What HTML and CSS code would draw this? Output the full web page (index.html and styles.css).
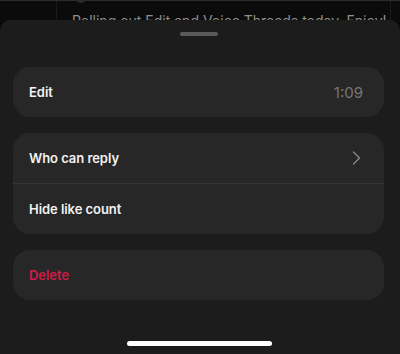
FILE: index.html
```html
<!DOCTYPE html>
<html>
<head>
<meta charset="utf-8">
<link rel="stylesheet" href="styles.css">
</head>
<body>
<div class="behind">
  <div class="rail"></div>
  <div class="post">
    <span class="avatar-edge"></span>
    <p class="post-text">Rolling out Edit and Voice Threads today. Enjoy!</p>
  </div>
  <div class="rail-right"></div>
</div>
<div class="sheet">
  <div class="handle"></div>
  <div class="groups">
    <div class="card">
      <div class="row"><span class="label">Edit</span><span class="timer">1:09</span></div>
    </div>
    <div class="card">
      <div class="row"><span class="label">Who can reply</span>
        <svg class="chev" width="9" height="14" viewBox="0 0 9 14"><path d="M1.5 1 L7.5 7 L1.5 13" fill="none" stroke="#8a8a8a" stroke-width="1.3" stroke-linecap="round" stroke-linejoin="round"/></svg>
      </div>
      <div class="divider"></div>
      <div class="row"><span class="label">Hide like count</span></div>
    </div>
    <div class="card">
      <div class="row"><span class="label danger">Delete</span></div>
    </div>
  </div>
  <div class="home"></div>
</div>
</body>
</html>
```

FILE: styles.css
```css
* { box-sizing: border-box; }
html, body { margin: 0; padding: 0; }
body {
  width: 400px;
  height: 354px;
  overflow: hidden;
  background: #0a0a0a;
  font-family: Inter, "Noto Sans", "Liberation Sans", sans-serif;
  display: flex;
  flex-direction: column;
}
.behind {
  height: 20px;
  flex: none;
  display: flex;
  overflow: hidden;
  border-top: 1px solid #2c2c2c;
  background: #0b0b0b;
}
.rail {
  width: 57px;
  flex: none;
  border-right: 1px solid #1c1c1c;
}
.post {
  flex: 1;
  position: relative;
  padding-left: 15px;
}
.avatar-edge {
  position: absolute;
  left: 20px;
  top: -4px;
  width: 8px;
  height: 6px;
  border-radius: 50%;
  background: #2a2a2a;
}
.post-text {
  margin: 0;
  padding-top: 11px;
  font-size: 14px;
  line-height: 18px;
  color: #8e8e8e;
  white-space: nowrap;
}
.rail-right {
  width: 10px;
  flex: none;
  border-left: 1px solid #1c1c1c;
}
.sheet {
  flex: 1;
  background: #1c1c1c;
  border-radius: 11px 11px 0 0;
  display: flex;
  flex-direction: column;
  align-items: center;
}
.handle {
  margin-top: 12px;
  margin-right: 3px;
  width: 38px;
  height: 4px;
  border-radius: 2px;
  background: #5b5b5b;
}
.groups {
  width: 100%;
  padding: 0 16px 0 13px;
  margin-top: 31px;
  display: flex;
  flex-direction: column;
  gap: 16px;
}
.card {
  background: #272727;
  border-radius: 17px;
}
.row {
  height: 50px;
  display: flex;
  align-items: center;
  justify-content: space-between;
  padding: 0 21px 0 16px;
}
.divider {
  height: 1px;
  background: #343434;
}
.label {
  font-size: 13px;
  font-weight: 600;
  color: #f2f2f2;
  letter-spacing: -0.05px;
}
.danger { color: #d21a45; }
.timer {
  font-size: 15px;
  color: #767676;
  font-weight: 400;
}
.chev { margin-right: 2px; }
.home {
  margin-top: 41px;
  margin-right: 2px;
  width: 145px;
  height: 5px;
  border-radius: 3px;
  background: #ffffff;
}
```
